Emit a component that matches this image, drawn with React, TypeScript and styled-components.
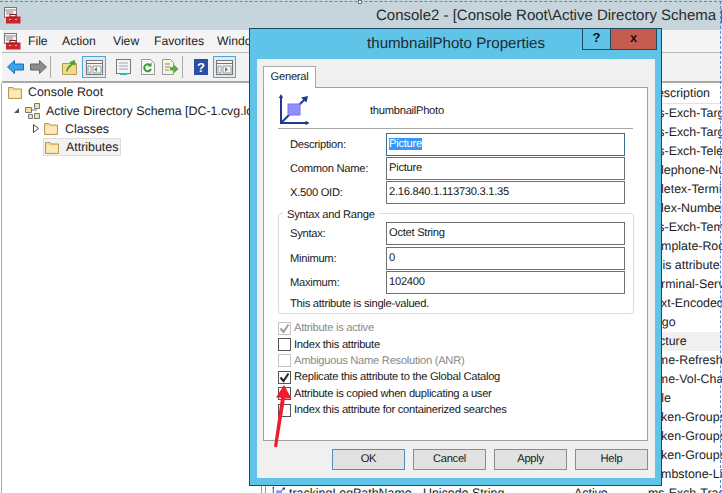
import React from "react";
import styled, { createGlobalStyle } from "styled-components";

const Global = createGlobalStyle`
  html, body { margin: 0; padding: 0; background: #fff; }
  * { box-sizing: border-box; }
  svg { flex: none; }
`;

const UI = `"Liberation Sans", Arial, sans-serif`;

const Desktop = styled.div`
  position: relative;
  width: 722px;
  height: 493px;
  overflow: hidden;
  font-family: ${UI};
  text-rendering: geometricPrecision;
  color: #1c1c1c;
  display: flex;
  flex-direction: column;
  background: #fff;
`;
const SelectionTop = styled.div`
  position: absolute;
  left: 0;
  right: 0;
  top: 1px;
  border-top: 1px dashed #4a90d0;
`;
const SelectionRight = styled.div`
  position: absolute;
  top: 1px;
  bottom: 0;
  right: 1px;
  border-right: 1px dashed #4a90d0;
  z-index: 3;
`;
const Handle = styled.div`
  position: absolute;
  left: 358px;
  top: 0;
  width: 4px;
  height: 4px;
  background: #fff;
  border: 1px solid #777;
`;
const TitleBar = styled.div`
  height: 30px;
  padding: 0 0 0 4px;
  background: #c6d5db;
  display: flex;
  align-items: center;
  flex: none;
  overflow: hidden;
`;
const TitleText = styled.div`
  margin-left: 355px;
  font-size: 15px;
  white-space: nowrap;
  color: #2a2a2a;
`;
const MenuBar = styled.div`
  height: 23px;
  margin-left: 2px;
  background: #f4f4f4;
  border-bottom: 1px solid #b9b9b9;
  display: flex;
  align-items: center;
  padding-left: 2px;
  flex: none;
`;
const MenuItem = styled.span<{ $w: number }>`
  width: ${(p) => p.$w}px;
  font-size: 12.2px;
  white-space: nowrap;
`;
const Toolbar = styled.div`
  height: 30px;
  margin-left: 2px;
  background: #f2f2f2;
  border-bottom: 2px solid #a8a8a8;
  display: flex;
  align-items: center;
  padding-left: 5px;
  flex: none;
`;
const ToolSep = styled.div<{ $l: number; $r: number }>`
  width: 1px;
  height: 22px;
  margin: 0 ${(p) => p.$r}px 0 ${(p) => p.$l}px;
  background: #a9a9a9;
`;
const ToolSlot = styled.div<{ $w: number; $m?: number; $on?: boolean }>`
  width: ${(p) => p.$w}px;
  height: ${(p) => (p.$on ? 22 : 20)}px;
  margin-right: ${(p) => p.$m ?? 0}px;
  display: flex;
  align-items: center;
  justify-content: center;
  border: ${(p) => (p.$on ? "1px solid #4fa6d8" : "none")};
  background: ${(p) => (p.$on ? "#dfeaf2" : "transparent")};
`;
const Content = styled.div`
  flex: 1;
  min-height: 0;
  display: flex;
  margin-left: 1px;
  border-left: 1px solid #a8a8a8;
`;
const Tree = styled.div`
  width: 260px;
  flex: none;
  border-right: 1px solid #9a9a9a;
  font-size: 12.4px;
  overflow: hidden;
`;
const TreeRow = styled.div<{ $indent: number }>`
  height: 18.4px;
  display: flex;
  align-items: center;
  padding-left: ${(p) => p.$indent}px;
  white-space: nowrap;
`;
const Twisty = styled.span<{ $m: number }>`
  width: 10px;
  flex: none;
  display: flex;
  justify-content: center;
  margin-right: ${(p) => p.$m}px;
`;
const TreeLabel = styled.span<{ $gap: number }>`
  margin-left: ${(p) => p.$gap}px;
`;
const Selected = styled.span`
  display: inline-flex;
  align-items: center;
  height: 18px;
  padding: 0 2px 0 1px;
  background: #f2f2f2;
  border: 1px solid #dcdcdc;
`;
const List = styled.div`
  flex: 1;
  min-width: 0;
  margin-left: 3px;
  border-left: 1px solid #9a9a9a;
  font-size: 12.4px;
  overflow: hidden;
`;
const ListHead = styled.div`
  height: 20.5px;
  padding-top: 1px;
  border-bottom: 1px solid #e2e2e2;
  display: grid;
  grid-template-columns: 157px 151px 74px 1fr;
  align-items: center;
`;
const ListRow = styled.div<{ $sel?: boolean }>`
  height: 19px;
  display: grid;
  grid-template-columns: 157px 151px 74px 1fr;
  align-items: center;
  white-space: nowrap;
  background: ${(p) => (p.$sel ? "#f0f0f0" : "transparent")};
`;
const NameCell = styled.div`
  display: flex;
  align-items: center;
  gap: 3px;
  padding-left: 6px;
`;

const Dialog = styled.div`
  position: absolute;
  left: 249px;
  top: 28px;
  width: 413px;
  height: 458px;
  background: #5fc4e8;
  border: 1px solid #1f4a66;
  display: flex;
  flex-direction: column;
  padding: 0 6px 7px 7px;
  z-index: 2;
`;
const DialogTitle = styled.div`
  height: 30px;
  flex: none;
  text-align: center;
  line-height: 30px;
  font-size: 15.1px;
  color: #1d2b33;
`;
const Controls = styled.div`
  position: absolute;
  top: 0;
  right: 4px;
  height: 21px;
  display: flex;
`;
const HelpBtn = styled.div`
  width: 29px;
  border: 1px solid #1f4a66;
  border-top: none;
  text-align: center;
  font: bold 13px/17px "Liberation Sans", sans-serif;
  color: #111;
`;
const CloseBtn = styled.div`
  width: 46px;
  background: #c65c50;
  border-bottom: 1px solid #1f4a66;
  border-right: 1px solid #1f4a66;
  text-align: center;
  font: bold 13px/18px "Liberation Sans", sans-serif;
  color: #111;
`;
const DialogBody = styled.div`
  flex: 1;
  background: #f0f0f0;
  padding: 7px 7px 0 6px;
  display: flex;
  flex-direction: column;
  font-size: 11.2px;
  letter-spacing: -0.28px;
  color: #1a1a1a;
`;
const Tab = styled.div`
  width: 53px;
  height: 22px;
  margin-bottom: -1px;
  background: #fff;
  border: 1px solid #a8a8a8;
  border-bottom: none;
  position: relative;
  z-index: 1;
  line-height: 21px;
  text-align: center;
`;
const Panel = styled.div`
  height: 354px;
  background: #fff;
  border: 1px solid #a0a0a0;
  padding: 5px 14px 0 14px;
  display: flex;
  flex-direction: column;
`;
const PanelHead = styled.div`
  height: 36px;
  flex: none;
  display: flex;
  align-items: flex-start;
  border-bottom: 1px solid #a8a8a8;
`;
const HeadName = styled.span`
  margin-left: 60px;
  margin-top: 12px;
`;
const FieldRows = styled.div<{ $gap: number }>`
  display: flex;
  flex-direction: column;
  gap: ${(p) => p.$gap}px;
`;
const Field = styled.div<{ $lead?: number }>`
  display: flex;
  align-items: center;
  padding-left: ${(p) => p.$lead ?? 12}px;
`;
const FieldLabel = styled.label<{ $w: number }>`
  width: ${(p) => p.$w}px;
  flex: none;
  padding-top: 1px;
`;
const Input = styled.div`
  width: 239px;
  height: 23px;
  flex: none;
  border: 1px solid #6f6f6f;
  padding: 0 2px;
  line-height: 20px;
  background: #fff;
`;
const FocusInput = styled(Input)`
  border-color: #3a6f8f;
`;
const Highlight = styled.span`
  background: #3399ff;
  color: #fff;
`;
const FieldsTop = styled.div`
  margin-top: 4px;
`;
const Group = styled.fieldset`
  margin: 9px 0 0;
  padding: 0;
  height: 101px;
  width: 356px;
  border: 1px solid #dcdcdc;
  border-radius: 3px;
  position: relative;
`;
const Legend = styled.div`
  position: absolute;
  left: 4px;
  top: -5px;
  padding: 0 4px;
  background: #fff;
`;
const GroupInner = styled.div`
  padding-top: 8px;
`;
const GroupNote = styled.div`
  padding: 2px 0 0 11px;
  line-height: 17px;
`;
const Checks = styled.div`
  margin-top: 6px;
  display: flex;
  flex-direction: column;
`;
const CheckRow = styled.div<{ $off?: boolean }>`
  height: 16.4px;
  display: flex;
  align-items: center;
  gap: 3px;
  color: ${(p) => (p.$off ? "#8a8a8a" : "inherit")};
`;
const Box = styled.span<{ $off?: boolean }>`
  width: 13px;
  height: 13px;
  flex: none;
  border: 1px solid ${(p) => (p.$off ? "#c4c4c4" : "#555")};
  background: #fff;
  display: flex;
  align-items: center;
  justify-content: center;
`;
const Buttons = styled.div`
  margin-top: 8px;
  padding-left: 69px;
  display: flex;
  gap: 8px;
`;
const Btn = styled.div<{ $def?: boolean }>`
  width: 73px;
  height: 21px;
  background: #e1e1e1;
  border: 1px solid ${(p) => (p.$def ? "#4f8fb8" : "#8c8c8c")};
  text-align: center;
  line-height: 18px;
`;
const ArrowLayer = styled.svg`
  position: absolute;
  left: 270px;
  top: 380px;
  z-index: 4;
`;

const Folder = ({ size = 14 }: { size?: number }) => (
  <svg width={size} height={size - 1} viewBox="0 0 14 13">
    <path d="M.5 1.500h4.500l1 1.500h7.500v9.500H.5z" fill="#f6dc92" stroke="#b79a55" />
    <path d="M1.500 4.500h11v7h-11z" fill="#fbeab8" />
  </svg>
);
const ConsoleIcon = () => (
  <svg width="17" height="17" viewBox="0 0 17 17">
    <rect x=".5" y=".5" width="12" height="10" fill="#f4f4f4" stroke="#777" />
    <path d="M1 3h11M2 5h7M2 7h7" stroke="#8a8a8a" />
    <rect x="2" y="9.500" width="14.500" height="7" fill="#c8252c" />
    <rect x="6" y="7.500" width="6" height="2.500" fill="none" stroke="#8b1a1f" />
    <path d="M5 12.500h2M11 12.500h2" stroke="#f3b5b5" />
  </svg>
);
const AttrIcon = ({ s = 32 }: { s?: number }) => (
  <svg width={s} height={s} viewBox="0 0 32 32">
    <path d="M3 3v27h27" fill="none" stroke="#1c3a8f" strokeWidth="2" />
    <path d="M3 1L.8 5h4.400zM31.500 30l-4-2.200v4.400z" fill="#1c3a8f" />
    <path d="M3 30L28 5" fill="none" stroke="#1c3a8f" strokeWidth="2" />
    <path d="M30 3l-7 1.500 5.500 5z" fill="#1c3a8f" />
    <rect x="10" y="11" width="12" height="11" fill="#8f8fff" stroke="#7676e6" />
  </svg>
);
const Tool = ({ kind }: { kind: string }) => {
  switch (kind) {
    case "back":
      return (
        <svg width="17" height="14" viewBox="0 0 17 14">
          <path d="M7.500 .5L.5 7l7 6.500V10h9V4h-9z" fill="#3aa4e8" stroke="#1d6fb5" />
        </svg>
      );
    case "fwd":
      return (
        <svg width="17" height="14" viewBox="0 0 17 14">
          <path d="M9.500 .5L16.500 7l-7 6.500V10h-9V4h9z" fill="#8c8c8c" stroke="#666" />
        </svg>
      );
    case "up":
      return (
        <svg width="15" height="16" viewBox="0 0 15 16">
          <path d="M.5 4.500h14v11H.5z" fill="#f3d98e" stroke="#b79a55" />
          <path d="M4 12C5 8 7 6 9 5L7.500 3 13 1l.5 6-2-1.500C9 7 7 9 5 13z" fill="#4fa02e" />
        </svg>
      );
    case "paneL":
    case "paneR":
      return (
        <svg width="17" height="15" viewBox="0 0 17 15">
          <rect x=".5" y=".5" width="16" height="14" fill="#f5f5f5" stroke="#777" />
          <path d="M.5 3.500h16" stroke="#777" />
          <path d="M2 6h3v7H2zM7 6h8v7H7z" fill="none" stroke="#9a9a9a" />
          {kind === "paneL" ? <path d="M11 7v5L8 9.500z" fill="#35a04a" /> : <path d="M9 7v5l3-2.500z" fill="#35a04a" />}
        </svg>
      );
    case "props":
      return (
        <svg width="15" height="16" viewBox="0 0 15 16">
          <rect x=".5" y=".5" width="14" height="14" fill="#f4f4f4" stroke="#777" />
          <path d="M3 4h9M3 7h9M3 10h9" stroke="#9aa" />
          <path d="M4 15h7" stroke="#3db0b0" strokeWidth="2" />
        </svg>
      );
    case "refresh":
      return (
        <svg width="14" height="16" viewBox="0 0 14 16">
          <path d="M.5.5h9l4 4v11H.5z" fill="#f7f7f7" stroke="#999" />
          <path d="M10 10a3.500 3.500 0 1 1-1-4" fill="none" stroke="#3a9a3a" strokeWidth="2" />
          <path d="M10.500 3.500v4h-4z" fill="#3a9a3a" />
        </svg>
      );
    case "export":
      return (
        <svg width="17" height="16" viewBox="0 0 17 16">
          <path d="M.5.5h8l3 3v12H.5z" fill="#f7f4dc" stroke="#999" />
          <path d="M3 5h5M3 8h5M3 11h4" stroke="#888" />
          <path d="M8 8h4V5.500L16.500 10 12 14v-2.500H8z" fill="#5cab3c" />
        </svg>
      );
    default:
      return (
        <svg width="14" height="16" viewBox="0 0 14 16">
          <rect width="14" height="16" fill="#2c4ea3" />
          <text x="7" y="13" fontSize="13" fontWeight="700" textAnchor="middle" fill="#fff" fontFamily="Liberation Sans">?</text>
        </svg>
      );
  }
};

const descriptions = [
  "ms-Exch-Target", "ms-Exch-Target", "ms-Exch-Telephone", "Telephone-Number", "Teletex-Terminal",
  "Telex-Number", "ms-Exch-Template", "Template-Roots", "This attribute", "Terminal-Server",
  "Text-Encoded", "Logo", "Picture", "Time-Refresh", "Time-Vol-Change", "Title",
  "Token-Groups", "Token-Groups", "Token-Groups", "Tombstone-Lifetime",
];

const checks: [string, boolean, boolean][] = [
  ["Attribute is active", true, true],
  ["Index this attribute", false, false],
  ["Ambiguous Name Resolution (ANR)", false, true],
  ["Replicate this attribute to the Global Catalog", true, false],
  ["Attribute is copied when duplicating a user", false, false],
  ["Index this attribute for containerized searches", false, false],
];

export default function App() {
  return (
    <Desktop>
      <Global />
      <TitleBar>
        <ConsoleIcon />
        <TitleText>Console2 - [Console Root\Active Directory Schema [DC-1.cvg.local]\Attributes]</TitleText>
      </TitleBar>
      <MenuBar>
        <ConsoleIcon />
        <MenuItem $w={7} />
        <MenuItem $w={34}>File</MenuItem>
        <MenuItem $w={51}>Action</MenuItem>
        <MenuItem $w={41}>View</MenuItem>
        <MenuItem $w={63}>Favorites</MenuItem>
        <MenuItem $w={60}>Window</MenuItem>
      </MenuBar>
      <Toolbar>
        <ToolSlot $w={17} $m={6}><Tool kind="back" /></ToolSlot>
        <ToolSlot $w={17}><Tool kind="fwd" /></ToolSlot>
        <ToolSep $l={3} $r={11} />
        <ToolSlot $w={15} $m={5}><Tool kind="up" /></ToolSlot>
        <ToolSlot $w={24} $m={10} $on><Tool kind="paneL" /></ToolSlot>
        <ToolSlot $w={15} $m={10}><Tool kind="props" /></ToolSlot>
        <ToolSlot $w={14} $m={7}><Tool kind="refresh" /></ToolSlot>
        <ToolSlot $w={17}><Tool kind="export" /></ToolSlot>
        <ToolSep $l={3} $r={11} />
        <ToolSlot $w={14} $m={5}><Tool kind="help" /></ToolSlot>
        <ToolSlot $w={23} $on><Tool kind="paneR" /></ToolSlot>
      </Toolbar>
      <Content>
        <Tree>
          <TreeRow $indent={6}><Folder /><TreeLabel $gap={6}>Console Root</TreeLabel></TreeRow>
          <TreeRow $indent={9}>
            <Twisty $m={4}>
              <svg width="7" height="7" viewBox="0 0 7 7"><path d="M6 1v5H1z" fill="#555" /></svg>
            </Twisty>
            <svg width="16" height="16" viewBox="0 0 16 16">
              <path d="M.5 4.500h6v5h-6zM9.500.5h5v5h-5zM9.500 10.500h5v5h-5zM3.500 11.500h4v4h-4z" fill="#f3e2a8" stroke="#777" />
              <path d="M7 7h5" stroke="#777" />
            </svg>
            <TreeLabel $gap={5}>Active Directory Schema [DC-1.cvg.local]</TreeLabel>
          </TreeRow>
          <TreeRow $indent={29}>
            <Twisty $m={3}>
              <svg width="6" height="9" viewBox="0 0 6 9"><path d="M.5.5v8l5-4z" fill="#fff" stroke="#444" /></svg>
            </Twisty>
            <Folder />
            <TreeLabel $gap={7}>Classes</TreeLabel>
          </TreeRow>
          <TreeRow $indent={41}>
            <Selected>
              <Folder />
              <TreeLabel $gap={7}>Attributes</TreeLabel>
            </Selected>
          </TreeRow>
        </Tree>
        <List>
          <ListHead>
            <span />
            <span />
            <span />
            <span>Description</span>
          </ListHead>
          {descriptions.map((d, i) => (
            <ListRow key={i} $sel={d === "Picture"}>
              <span />
              <span />
              <span />
              <span>{d}</span>
            </ListRow>
          ))}
          <ListRow>
            <NameCell><AttrIcon s={14} /><span>trackingLogPathName</span></NameCell>
            <span>Unicode String</span>
            <span>Active</span>
            <span>ms-Exch-Tracking</span>
          </ListRow>
        </List>
      </Content>

      <SelectionTop />
      <SelectionRight />
      <Handle />

      <Dialog>
        <DialogTitle>thumbnailPhoto Properties</DialogTitle>
        <Controls>
          <HelpBtn>?</HelpBtn>
          <CloseBtn>x</CloseBtn>
        </Controls>
        <DialogBody>
          <Tab>General</Tab>
          <Panel>
            <PanelHead>
              <AttrIcon />
              <HeadName>thumbnailPhoto</HeadName>
            </PanelHead>
            <FieldsTop>
              <FieldRows $gap={1}>
                <Field>
                  <FieldLabel $w={96}>Description:</FieldLabel>
                  <FocusInput><Highlight>Picture</Highlight></FocusInput>
                </Field>
                <Field>
                  <FieldLabel $w={96}>Common Name:</FieldLabel>
                  <Input>Picture</Input>
                </Field>
                <Field>
                  <FieldLabel $w={96}>X.500 OID:</FieldLabel>
                  <Input>2.16.840.1.113730.3.1.35</Input>
                </Field>
              </FieldRows>
            </FieldsTop>
            <Group>
              <Legend>Syntax and Range</Legend>
              <GroupInner>
                <FieldRows $gap={1.5}>
                  <Field $lead={11}>
                    <FieldLabel $w={96}>Syntax:</FieldLabel>
                    <Input>Octet String</Input>
                  </Field>
                  <Field $lead={11}>
                    <FieldLabel $w={96}>Minimum:</FieldLabel>
                    <Input>0</Input>
                  </Field>
                  <Field $lead={11}>
                    <FieldLabel $w={96}>Maximum:</FieldLabel>
                    <Input>102400</Input>
                  </Field>
                </FieldRows>
                <GroupNote>This attribute is single-valued.</GroupNote>
              </GroupInner>
            </Group>
            <Checks>
              {checks.map(([label, on, off]) => (
                <CheckRow key={label} $off={off}>
                  <Box $off={off}>
                    {on && (
                      <svg width="11" height="11" viewBox="0 0 11 11">
                        <path d="M1.500 5.500l3 3.500 5-7.500" fill="none" stroke={off ? "#a0a0a0" : "#222"} strokeWidth="2" />
                      </svg>
                    )}
                  </Box>
                  <span>{label}</span>
                </CheckRow>
              ))}
            </Checks>
          </Panel>
          <Buttons>
            <Btn $def>OK</Btn>
            <Btn>Cancel</Btn>
            <Btn>Apply</Btn>
            <Btn>Help</Btn>
          </Buttons>
        </DialogBody>
      </Dialog>

      <ArrowLayer width="30" height="72" viewBox="0 0 30 72">
        <path d="M14 5L6 17.500l5 .2L4 66.500l3 1 8-49 6.500 0z" fill="#ee1c2e" />
      </ArrowLayer>
    </Desktop>
  );
}
